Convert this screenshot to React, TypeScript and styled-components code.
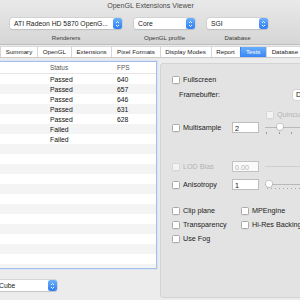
import React from "react";
import styled, { createGlobalStyle, css } from "styled-components";

const GlobalStyle = createGlobalStyle`
  html, body {
    margin: 0;
    padding: 0;
    background: #ececec;
  }
  body {
    font-family: "Liberation Sans", Arial, sans-serif;
    font-size: 7.2px;
    color: #222;
  }
`;

const rows = [
  { status: "Passed", fps: "640" },
  { status: "Passed", fps: "657" },
  { status: "Passed", fps: "646" },
  { status: "Passed", fps: "631" },
  { status: "Passed", fps: "628" },
  { status: "Failed", fps: "" },
  { status: "Failed", fps: "" },
];

const tabs = [
  "Summary",
  "OpenGL",
  "Extensions",
  "Pixel Formats",
  "Display Modes",
  "Report",
  "Tests",
  "Database",
];

const Stepper = () => (
  <StepBox>
    <svg width="5" height="8" viewBox="0 0 5 8">
      <path d="M1 3 L2.5 1.5 L4 3 M1 5 L2.5 6.5 L4 5" fill="none" stroke="#fff" strokeWidth="0.9" />
    </svg>
  </StepBox>
);

const App = (): JSX.Element => {
  return (
    <Window>
      <GlobalStyle />
      <Toolbar>
        <Title>OpenGL Extensions Viewer</Title>
        <ToolItems>
          <ToolItem $w={112}>
            <Popup>
              <span>ATI Radeon HD 5870 OpenG...</span>
              <Stepper />
            </Popup>
            <ToolLabel>Renderers</ToolLabel>
          </ToolItem>
          <ToolItem $w={61}>
            <Popup>
              <span>Core</span>
              <Stepper />
            </Popup>
            <ToolLabel>OpenGL profile</ToolLabel>
          </ToolItem>
          <ToolItem $w={61}>
            <Popup>
              <span>SGI</span>
              <Stepper />
            </Popup>
            <ToolLabel>Database</ToolLabel>
          </ToolItem>
        </ToolItems>
      </Toolbar>

      <TabBar>
        <Tab $edge>s</Tab>
        {tabs.map((t) => (
          <Tab key={t} $active={t === "Tests"}>
            {t}
          </Tab>
        ))}
      </TabBar>

      <Body>
        <LeftColumn>
          <TablePanel>
            <HeaderRow>
              <StatusCell $head>Status</StatusCell>
              <FpsCell $head>FPS</FpsCell>
            </HeaderRow>
            {Array.from({ length: 20 }).map((_, i) => (
              <Row key={i} $odd={i % 2 === 1}>
                <StatusCell>{rows[i]?.status}</StatusCell>
                <FpsCell>{rows[i]?.fps}</FpsCell>
              </Row>
            ))}
          </TablePanel>
          <CubePopup>
            <span>Cube</span>
            <Stepper />
          </CubePopup>
        </LeftColumn>

        <Group>
          <OptionRow $top={11}>
            <Check />
            <span>Fullscreen</span>
          </OptionRow>
          <FbRow>
            <span>Framebuffer:</span>
            <SmallButton>D</SmallButton>
          </FbRow>
          <QuincunxRow>
            <Check $disabled />
            <Dim>Quincunx</Dim>
          </QuincunxRow>
          <SliderRow $top={3}>
            <LabelSlot>
              <Check />
              <span>Multisample</span>
            </LabelSlot>
            <Field>2</Field>
            <Track>
              <Knob $at={12} />
              <Ticks>
                <i />
                <i />
                <i />
              </Ticks>
            </Track>
          </SliderRow>
          <SliderRow $top={28}>
            <LabelSlot>
              <Check $disabled />
              <Dim>LOD Bias</Dim>
            </LabelSlot>
            <Field $disabled>0.00</Field>
            <Track $disabled />
          </SliderRow>
          <SliderRow $top={7}>
            <LabelSlot>
              <Check />
              <span>Anisotropy</span>
            </LabelSlot>
            <Field>1</Field>
            <Track>
              <Knob $at={1} />
              <DotTicks />
            </Track>
          </SliderRow>
          <CheckGrid>
            <OptionRow>
              <Check />
              <span>Clip plane</span>
            </OptionRow>
            <OptionRow>
              <Check />
              <span>MPEngine</span>
            </OptionRow>
            <OptionRow>
              <Check />
              <span>Transparency</span>
            </OptionRow>
            <OptionRow>
              <Check />
              <span>Hi-Res Backing</span>
            </OptionRow>
            <OptionRow>
              <Check />
              <span>Use Fog</span>
            </OptionRow>
          </CheckGrid>
        </Group>
      </Body>
    </Window>
  );
};

export default App;

const Window = styled.div`
  width: 300px;
  height: 300px;
  overflow: hidden;
  background: #ececec;
  display: flex;
  flex-direction: column;
`;

const Toolbar = styled.div`
  height: 45px;
  box-sizing: border-box;
  background: linear-gradient(#e9e9e9, #d6d6d6);
  border-bottom: 1px solid #bdbdbd;
  display: flex;
  flex-direction: column;
`;

const Title = styled.div`
  height: 13px;
  line-height: 13px;
  font-size: 7.1px;
  text-align: center;
  color: #4a4a4a;
  padding-left: 1px;
`;

const ToolItems = styled.div`
  display: flex;
  gap: 12px;
  padding-left: 10px;
  margin-top: 5px;
`;

const ToolItem = styled.div<{ $w: number }>`
  width: ${(p) => p.$w}px;
  display: flex;
  flex-direction: column;
  align-items: center;
  gap: 5px;
`;

const popupBase = css`
  height: 11px;
  box-sizing: border-box;
  background: #fff;
  border-radius: 2.5px;
  box-shadow: 0 0 0 0.5px #c4c4c4, 0 0.5px 1px rgba(0, 0, 0, 0.15);
  display: flex;
  align-items: center;
  justify-content: space-between;
  padding-left: 4px;
  font-size: 6.8px;
  color: #222;
  white-space: nowrap;
`;

const Popup = styled.div`
  ${popupBase}
  width: 100%;
`;

const StepBox = styled.div`
  width: 9px;
  height: 11px;
  border-radius: 2.5px;
  background: linear-gradient(#6cb0fb, #2f7ef3);
  display: flex;
  align-items: center;
  justify-content: center;
  flex-shrink: 0;
`;

const ToolLabel = styled.div`
  font-size: 6.1px;
  color: #3a3a3a;
  white-space: nowrap;
`;

const TabBar = styled.div`
  display: flex;
  margin-top: 2px;
  margin-left: -6px;
  height: 10px;
  background: #fff;
  box-shadow: 0 0 0 0.5px #c6c6c6, 0 0.5px 1px rgba(0, 0, 0, 0.12);
  border-radius: 2.5px;
  align-self: flex-start;
  white-space: nowrap;
  font-size: 6.2px;
`;

const Tab = styled.div<{ $active?: boolean; $edge?: boolean }>`
  padding: 0 4.7px;
  line-height: 10px;
  color: #222;
  border-left: 1px solid #d6d6d6;
  ${(p) => p.$edge && css`
    border-left: none;
    padding: 0 1px 0 2px;
  `}
  ${(p) => p.$active && css`
    background: linear-gradient(#69aefb, #3a86f5);
    color: #fff;
    border-left-color: #3a86f5;
    padding: 0 5.5px;
  `}
`;

const Body = styled.div`
  display: flex;
  margin-top: 4px;
`;

const LeftColumn = styled.div`
  width: 157px;
  flex-shrink: 0;
  display: flex;
  flex-direction: column;
`;

const TablePanel = styled.div`
  height: 208px;
  box-sizing: border-box;
  background: #fff;
  border: 1px solid #a3bfeb;
  border-left: none;
  box-shadow: 0 0 0 0.5px #c9daf4;
  overflow: hidden;
  font-size: 6.8px;
`;

const HeaderRow = styled.div`
  display: flex;
  height: 11px;
  align-items: center;
  border-bottom: 1px solid #e6e6e6;
  font-size: 6.4px;
`;

const Row = styled.div<{ $odd: boolean }>`
  display: flex;
  height: 10px;
  align-items: center;
  background: ${(p) => (p.$odd ? "#f4f4f5" : "#fff")};
`;

const StatusCell = styled.div<{ $head?: boolean }>`
  width: 67px;
  padding-left: 50px;
  color: ${(p) => (p.$head ? "#555" : "#111")};
`;

const FpsCell = styled.div<{ $head?: boolean }>`
  color: ${(p) => (p.$head ? "#555" : "#111")};
`;

const CubePopup = styled.div`
  ${popupBase}
  width: 62px;
  margin-left: -5px;
  margin-top: 11px;
`;

const Group = styled.div`
  margin: 2px -12px 0 3px;
  height: 235px;
  flex: 1;
  box-sizing: border-box;
  background: #e3e3e3;
  border: 1px solid #d3d3d3;
  border-radius: 3px;
  padding-left: 11px;
  display: flex;
  flex-direction: column;
`;

const Check = styled.span<{ $disabled?: boolean }>`
  width: 6px;
  height: 6px;
  border-radius: 1.5px;
  background: #fff;
  border: 0.5px solid ${(p) => (p.$disabled ? "#cfcfcf" : "#aaa")};
  box-shadow: 0 0.5px 0.5px rgba(0, 0, 0, 0.08);
  opacity: ${(p) => (p.$disabled ? 0.6 : 1)};
  flex-shrink: 0;
`;

const Dim = styled.span`
  color: #b3b3b3;
`;

const OptionRow = styled.div<{ $top?: number }>`
  display: flex;
  align-items: center;
  gap: 3px;
  height: 9px;
  margin-top: ${(p) => p.$top ?? 0}px;
  white-space: nowrap;
`;

const FbRow = styled.div`
  display: flex;
  align-items: center;
  justify-content: space-between;
  margin-top: 5px;
  padding-left: 7px;
  height: 11px;
`;

const SmallButton = styled.div`
  width: 20px;
  height: 10px;
  line-height: 10px;
  background: #fff;
  border-radius: 2.5px;
  box-shadow: 0 0 0 0.5px #c4c4c4;
  padding-left: 3px;
  box-sizing: border-box;
  margin-right: -2px;
`;

const QuincunxRow = styled.div`
  display: flex;
  align-items: center;
  gap: 3px;
  height: 9px;
  margin-top: 10px;
  margin-left: 94px;
  white-space: nowrap;
`;

const SliderRow = styled.div<{ $top: number }>`
  display: flex;
  align-items: center;
  height: 11px;
  margin-top: ${(p) => p.$top}px;
`;

const LabelSlot = styled.div`
  width: 60px;
  display: flex;
  align-items: center;
  gap: 3px;
`;

const Field = styled.div<{ $disabled?: boolean }>`
  width: 27px;
  height: 11px;
  line-height: 11px;
  box-sizing: border-box;
  padding-left: 2px;
  background: #fff;
  border: 0.5px solid #bdbdbd;
  color: ${(p) => (p.$disabled ? "#aaa" : "#111")};
  opacity: ${(p) => (p.$disabled ? 0.85 : 1)};
`;

const Track = styled.div<{ $disabled?: boolean }>`
  position: relative;
  flex: 1;
  margin-left: 6px;
  height: 1.5px;
  background: ${(p) => (p.$disabled ? "#cfcfcf" : "#b8b8b8")};
  border-radius: 1px;
`;

const Knob = styled.div<{ $at: number }>`
  position: absolute;
  left: ${(p) => p.$at}px;
  top: -3px;
  width: 6px;
  height: 6px;
  background: #fff;
  border-radius: 1.5px 1.5px 3px 3px;
  box-shadow: 0 0 0 0.5px #b0b0b0, 0 0.5px 1px rgba(0, 0, 0, 0.25);
`;

const Ticks = styled.div`
  position: absolute;
  top: 5px;
  left: 1px;
  width: 26px;
  display: flex;
  justify-content: space-between;
  i {
    width: 0.7px;
    height: 2px;
    background: #999;
  }
`;

const DotTicks = styled.div`
  position: absolute;
  top: 4px;
  left: 2px;
  right: 0;
  height: 1px;
  background: repeating-linear-gradient(90deg, #a5a5a5 0 0.7px, transparent 0.7px 4px);
`;

const CheckGrid = styled.div`
  display: grid;
  grid-template-columns: 69px auto;
  row-gap: 5px;
  margin-top: 16px;
`;
